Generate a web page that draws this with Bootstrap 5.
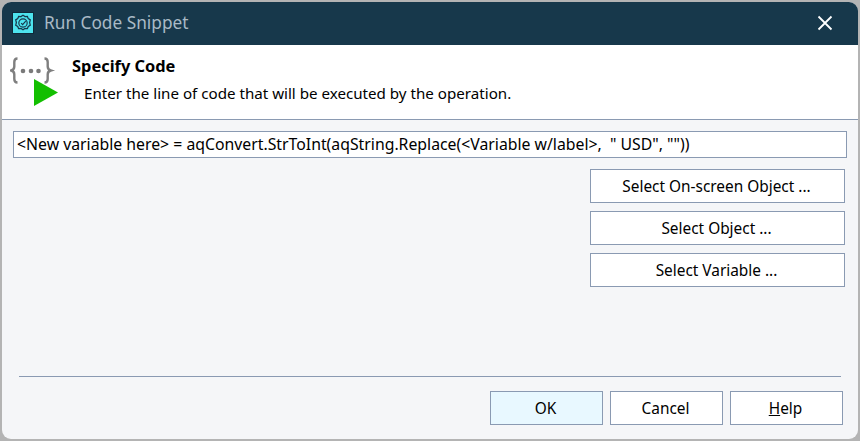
<!DOCTYPE html>
<html lang="en">
<head>
<meta charset="utf-8">
<title>Run Code Snippet</title>
<link href="https://cdn.jsdelivr.net/npm/bootstrap@5.3.0/dist/css/bootstrap.min.css" rel="stylesheet">
<style>
html,body{height:100%;}
body{background:#b4b4b4;margin:0;overflow:hidden;font-family:"Noto Sans","Open Sans",sans-serif;font-size:15px;color:#000;padding:2px;}
.dlg-win{height:437px;background:#f5f6f8;border-radius:9px;overflow:hidden;}
.dlg-title{height:43px;background:#17384b;color:#a9bac6;font-size:17.25px;padding:0 0 2px 10px;}
.dlg-appicon{width:22px;height:22px;background:#4de3ee;border:1px solid #0e2a3a;margin-right:10px;}
.dlg-close{width:16px;height:16px;margin-right:25px;}
.dlg-head{height:75px;background:#fff;border-bottom:1px solid #8a9ab2;}
.dlg-logo{width:70px;padding-left:8px;padding-top:12px;}
.dlg-heading{font-weight:700;font-size:16.4px;line-height:20px;margin-top:11px;}
.dlg-sub{font-size:15.15px;line-height:20px;margin-top:7px;padding-left:12px;}
.dlg-body{padding:11px 11px 0 11px;}
.dlg-input{height:27px;border:1px solid #8a9ab2;background:#fff;padding:0 3px;font-size:15.8px;line-height:25px;white-space:pre;}
.dlg-btn{background:#fff;border:1px solid #8a9ab2;border-radius:0;color:#000;font-size:15.4px;line-height:20px;padding:2px 2px 0 0;height:34px;}
.dlg-btn:hover{background:#fff;color:#000;border-color:#8a9ab2;}
.dlg-btn-wide{width:255px;}
.dlg-btn-foot{width:113px;}
.dlg-btn-ok,.dlg-btn-ok:hover{background:#e8f8ff;}
.dlg-side{margin-top:11px;margin-right:2px;gap:8px;}
.dlg-rule{height:1px;background:#8a9ab2;margin:0 6px;}
.dlg-foot{gap:7px;margin-top:14px;margin-right:4px;padding-bottom:14px;}
</style>
</head>
<body>
<div class="dlg-win d-flex flex-column">
  <div class="dlg-title d-flex align-items-center flex-shrink-0">
    <svg class="dlg-appicon flex-shrink-0" viewBox="0 0 22 22" aria-hidden="true"><path d="M11 2.500l2.200 1.500 2.600-.2 1 2.400 2.200 1.400-.7 2.900.7 2.900-2.200 1.400-1 2.400-2.600-.2-2.200 1.500-2.200-1.500-2.600.2-1-2.400-2.200-1.400.7-2.900-.7-2.900 2.200-1.400 1-2.400 2.600.2z" fill="none" stroke="#17384b" stroke-width="1.400"/><circle cx="11" cy="11" r="4.600" fill="none" stroke="#17384b" stroke-width="1.300"/><path d="M9 11.100l1.600 1.600 3.400-3.700" fill="none" stroke="#17384b" stroke-width="1.300"/></svg>
    <span class="flex-grow-1">Run Code Snippet</span>
    <svg class="dlg-close flex-shrink-0" viewBox="0 0 16 16" aria-hidden="true"><path d="M1.500 1.500l13 13M14.500 1.500l-13 13" stroke="#fff" stroke-width="1.800"/></svg>
  </div>
  <div class="dlg-head d-flex flex-shrink-0">
    <div class="dlg-logo flex-shrink-0">
      <svg class="d-block" width="50" height="50" viewBox="0 0 50 50" aria-hidden="true">
        <path d="M7.500 1.500c-2.500 0-3.200 1.200-3.200 3.500v4.500c0 2.300-.9 3.400-3 4 2.100.6 3 1.700 3 4v4.500c0 2.300.7 3.500 3.200 3.500M34.500 1.500c2.500 0 3.200 1.200 3.200 3.500v4.500c0 2.300.9 3.400 3 4-2.100.6-3 1.700-3 4v4.500c0 2.300-.7 3.500-3.200 3.500" fill="none" stroke="#7f7f7f" stroke-width="2.400"/>
        <circle cx="13" cy="14" r="2.300" fill="#7a7a7a"/><circle cx="21" cy="14" r="2.300" fill="#7a7a7a"/><circle cx="28.500" cy="14" r="2.300" fill="#7a7a7a"/>
        <path d="M24 22l24 13.500-24 13.500z" fill="#13bf00"/>
      </svg>
    </div>
    <div>
      <div class="dlg-heading">Specify Code</div>
      <div class="dlg-sub">Enter the line of code that will be executed by the operation.</div>
    </div>
  </div>
  <div class="dlg-body d-flex flex-column flex-grow-1">
    <div class="dlg-input">&lt;New variable here&gt; = aqConvert.StrToInt(aqString.Replace(&lt;Variable w/label&gt;,  " USD", ""))</div>
    <div class="dlg-side d-flex flex-column align-items-end">
      <button type="button" class="btn dlg-btn dlg-btn-wide">Select On-screen Object ...</button>
      <button type="button" class="btn dlg-btn dlg-btn-wide">Select Object ...</button>
      <button type="button" class="btn dlg-btn dlg-btn-wide">Select Variable ...</button>
    </div>
    <div class="mt-auto">
      <div class="dlg-rule"></div>
      <div class="dlg-foot d-flex justify-content-end">
        <button type="button" class="btn dlg-btn dlg-btn-foot dlg-btn-ok">OK</button>
        <button type="button" class="btn dlg-btn dlg-btn-foot">Cancel</button>
        <button type="button" class="btn dlg-btn dlg-btn-foot"><u>H</u>elp</button>
      </div>
    </div>
  </div>
</div>
<script src="https://cdn.jsdelivr.net/npm/bootstrap@5.3.0/dist/js/bootstrap.bundle.min.js"></script>
</body>
</html>
